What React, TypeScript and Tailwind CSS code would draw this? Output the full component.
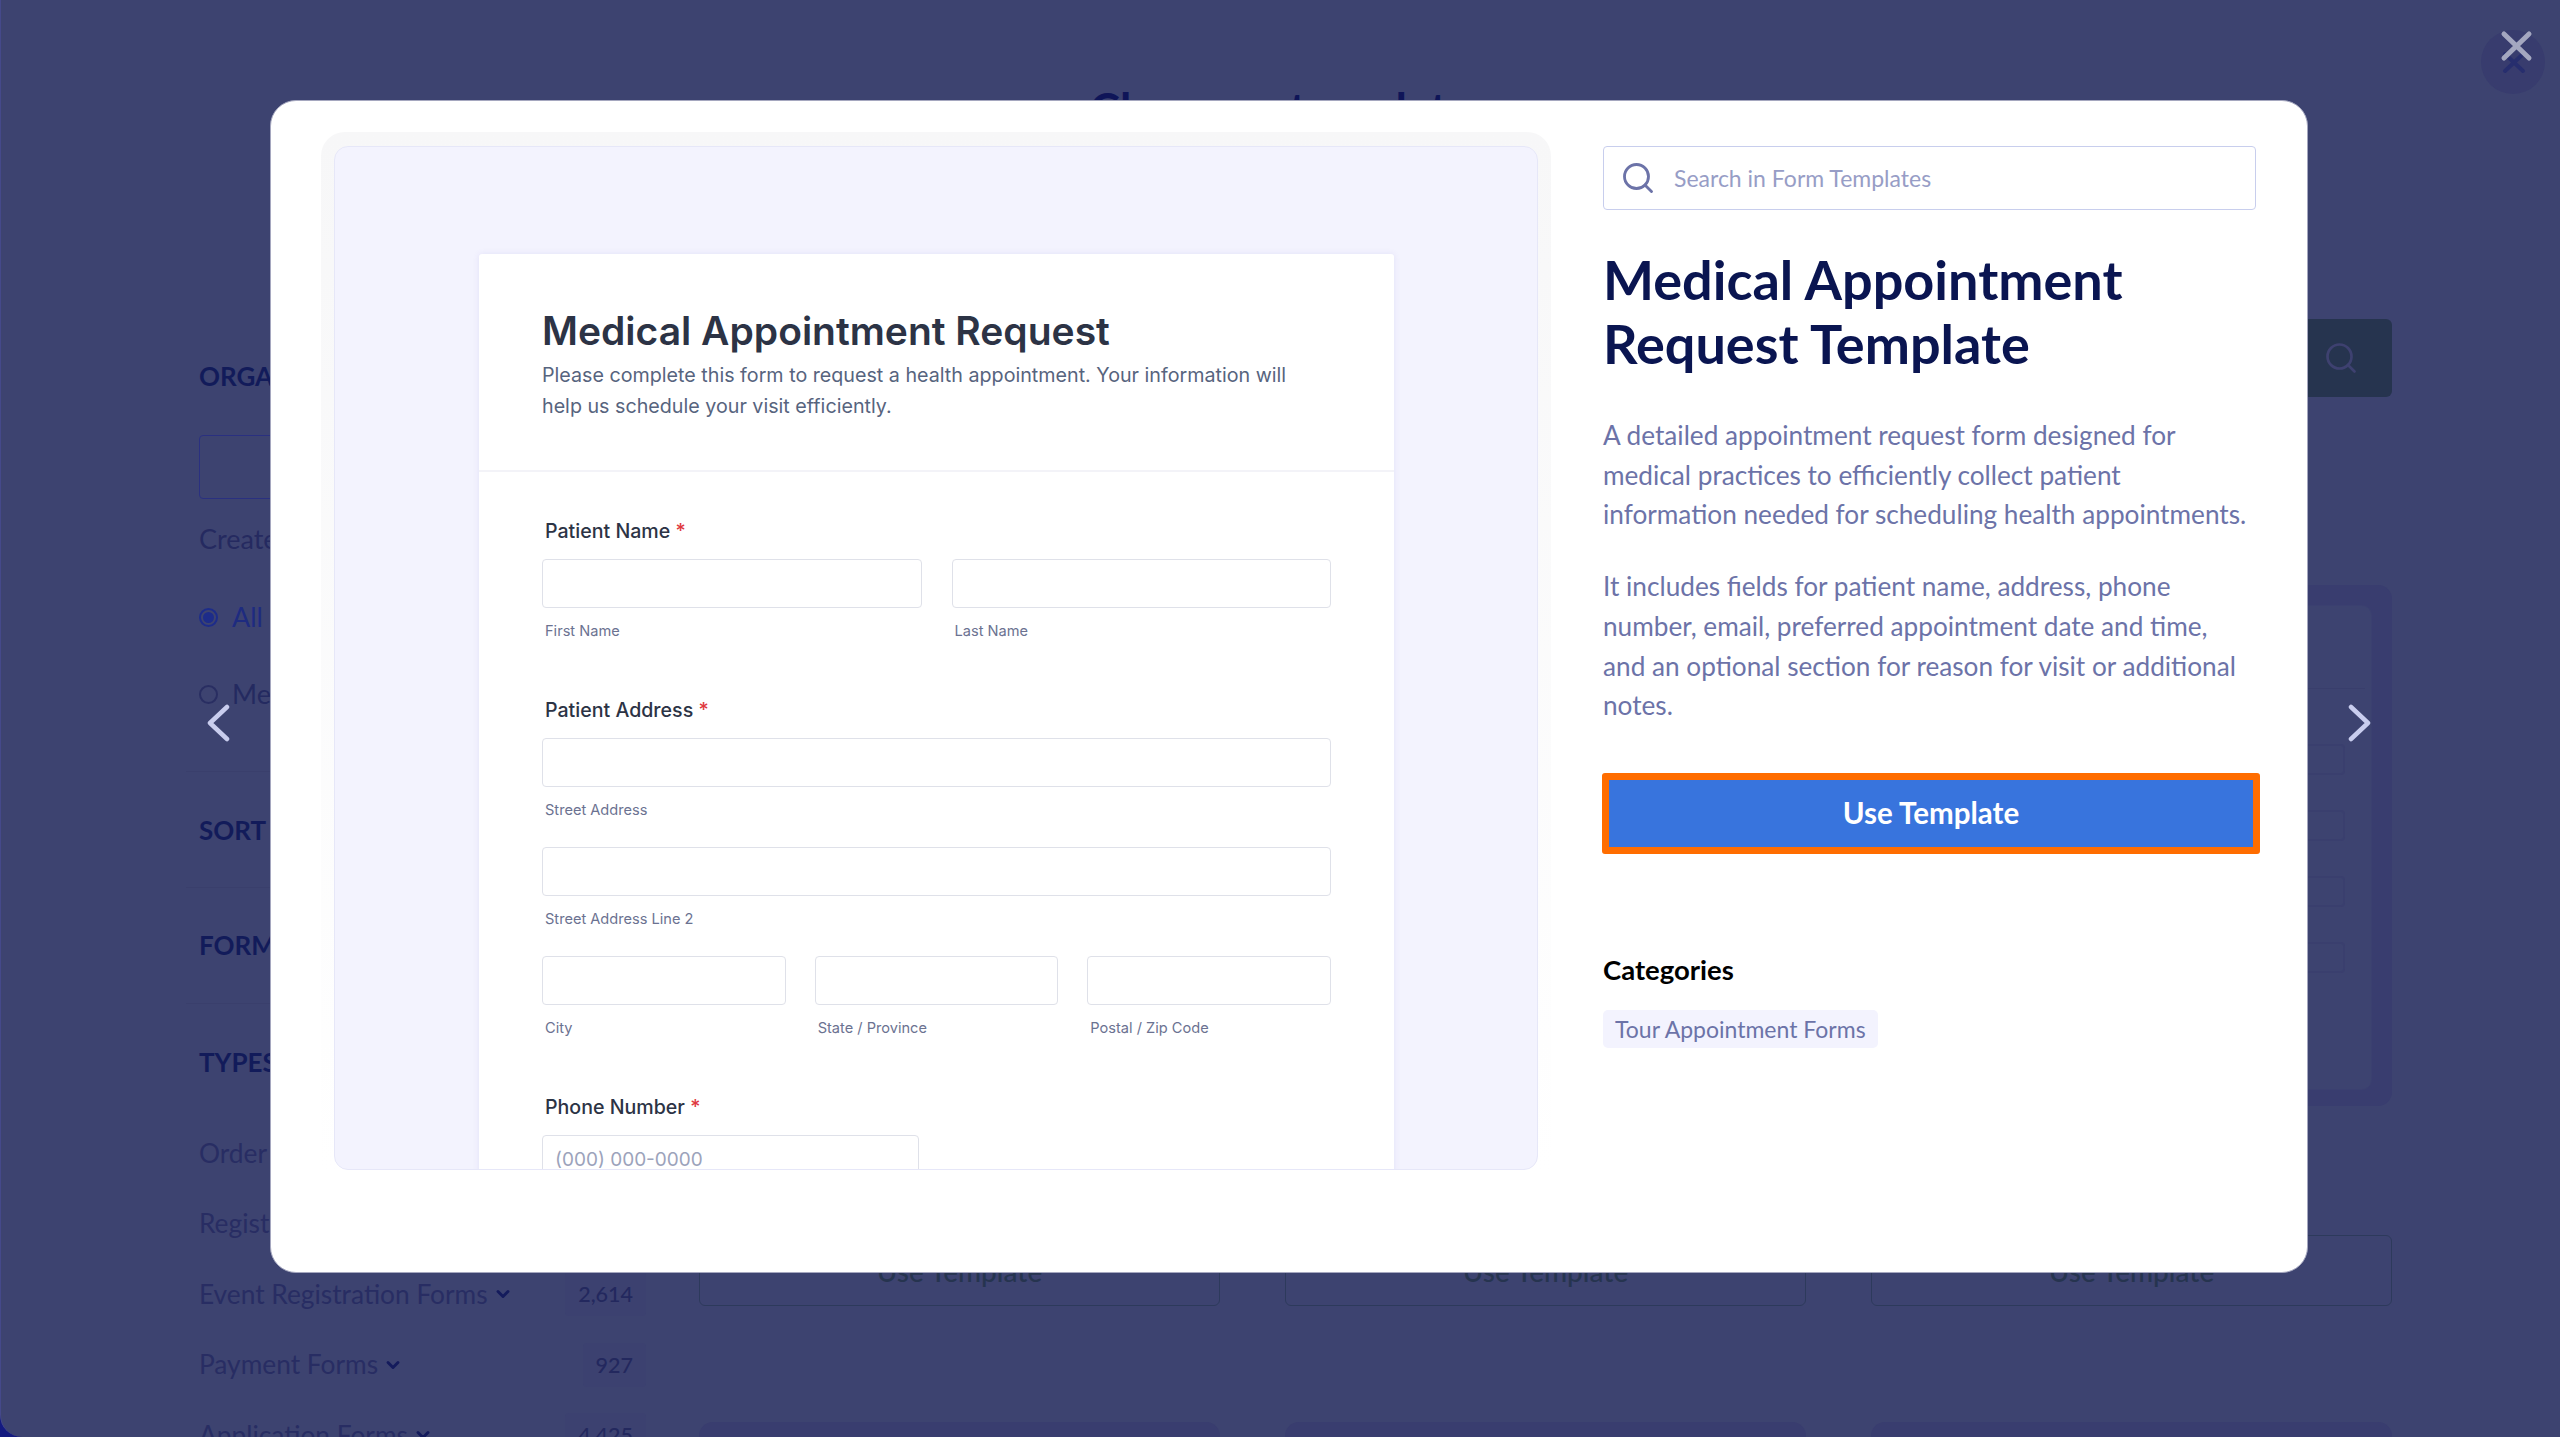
import React from 'react';
import { ChevronDown, Search } from 'lucide-react';

const sideRows = [
  { name: 'Order Forms', count: '' },
  { name: 'Registration Forms', count: '' },
  { name: 'Event Registration Forms', count: '2,614' },
  { name: 'Payment Forms', count: '927' },
  { name: 'Application Forms', count: '4,425' },
];

const Sidebar: React.FC = () => (
  <aside className="w-[460px] shrink-0 pt-[215px] text-[#282d63]">
    <div className="px-[13px]">
      <h3 className="h-[32px] text-[26px] leading-[32px] font-bold text-[#121b5a]">ORGANIZATION</h3>
      <div className="mt-[43px] h-[64px] rounded-[4px] border border-[#2a3080]" />
      <p className="mt-[23px] h-[34px] text-[27px] leading-[34px] text-[#252a60]">Created by</p>
      <div className="mt-[44px] flex h-[34px] items-center gap-[14px] text-[27px] text-[#1e2b80]">
        <span className="flex size-[19px] items-center justify-center rounded-full border-2 border-[#1d2c8a]">
          <span className="size-[11px] rounded-full bg-[#1d2c8a]" />
        </span>
        All
      </div>
      <div className="mt-[43px] flex h-[34px] items-center gap-[14px] text-[27px] text-[#242a60]">
        <span className="size-[19px] rounded-full border-2 border-[#292e62]" />
        Me
      </div>
    </div>
    <div className="mt-[60px] h-px bg-[#3a3f6c]" />
    <h3 className="mx-[13px] mt-[42px] h-[32px] text-[26px] leading-[32px] font-bold text-[#121b5a]">SORT BY</h3>
    <div className="mt-[41px] h-px bg-[#3a3f6c]" />
    <h3 className="mx-[13px] mt-[41px] h-[32px] text-[26px] leading-[32px] font-bold text-[#121b5a]">FORM LAYOUT</h3>
    <div className="mt-[42px] h-px bg-[#3a3f6c]" />
    <h3 className="mx-[13px] mt-[42px] h-[32px] text-[26px] leading-[32px] font-bold text-[#121b5a]">TYPES</h3>
    <div className="mt-[40px] pl-[13px]">
      {sideRows.map((row) => (
        <div key={row.name} className="flex h-[70.5px] items-center justify-between text-[26.3px]">
          <span className="flex items-center gap-[5px]">
            {row.name}
            <ChevronDown size={20} strokeWidth={3.5} className="text-[#141b5c]" />
          </span>
          {row.count && (
            <span className="flex h-[44px] items-center rounded-[4px] bg-[#3c4170] px-[13px] text-[21.5px] font-medium text-[#23285e]">{row.count}</span>
          )}
        </div>
      ))}
    </div>
  </aside>
);

const TemplateCard: React.FC = () => (
  <div>
    <div className="h-[521px] rounded-[14px] bg-[#393d6f] px-[20px] pt-[20px]">
      <div className="h-[485px] rounded-[10px] border border-[#3b4070] bg-[#3d4370] px-[6px] pt-[82px]">
        <div className="h-px bg-[#393e6c]" />
        <div className="mx-[20px] mt-[55px] flex flex-col gap-[35px]">
          {[0, 1, 2, 3].map((i) => (
            <div key={i} className="h-[31px] rounded-[4px] border-2 border-[#3a3f6e]" />
          ))}
        </div>
      </div>
    </div>
    <div className="mt-[129px] flex h-[71px] items-center justify-center rounded-[6px] border border-[#2d3a5c] text-[28px] font-medium text-[#26344f]">
      Use Template
    </div>
  </div>
);

const Background: React.FC = () => (
  <div className="h-full rounded-bl-[22px] border-l border-[#45498a] bg-[#3d4370]">
    <h1 className="pt-[73px] text-center text-[46px] leading-[72px] font-bold text-[#0f1558]">Choose a template</h1>
    <div className="flex pl-[185px] pr-[168px]">
      <Sidebar />
      <main className="ml-[53px] flex-1 pt-[174px]">
        <div className="flex h-[78px] justify-end">
          <div className="flex w-[120px] items-center justify-center rounded-[6px] bg-[#26344f] pl-[18px]">
            <Search size={36} strokeWidth={1.8} className="text-[#3e4170]" />
          </div>
        </div>
        <div className="mt-[188px] grid grid-cols-3 gap-x-[65px]">
          <TemplateCard />
          <TemplateCard />
          <TemplateCard />
          <div className="mt-[116px] h-[521px] rounded-[14px] bg-[#393d6f]" />
          <div className="mt-[116px] h-[521px] rounded-[14px] bg-[#393d6f]" />
          <div className="mt-[116px] h-[521px] rounded-[14px] bg-[#393d6f]" />
        </div>
      </main>
    </div>
  </div>
);

const Label: React.FC<{ text: string }> = ({ text }) => (
  <div className="mb-[14px] h-[28px] pl-[3px] text-[19.6px] leading-[28px] font-medium text-[#2c3345]">
    {text} <span className="text-[#e0393e]">*</span>
  </div>
);

const Input: React.FC<{ sub: string }> = ({ sub }) => (
  <div>
    <div className="h-[49px] rounded-[4px] border-[1.5px] border-[#dfe1e9] bg-white" />
    <div className="mt-[9px] h-[28px] pl-[3px] text-[14.6px] leading-[28px] text-[#6b7291]">{sub}</div>
  </div>
);

const FormPreview: React.FC = () => (
  <div className="h-[1038px] w-[1230px] shrink-0 rounded-t-[24px] bg-gradient-to-b from-[#f7f7f8] to-white px-[13px] pt-[14px]">
    <div className="h-[1024px] overflow-hidden rounded-[14px] border border-[#e6e7f8] bg-[#f3f3fe] pt-[107px] pr-[143px] pl-[144px]">
      <div className="h-[1000px] rounded-t-[3px] bg-white font-['Inter'] shadow-[0_0_6px_rgba(86,70,200,0.1)]">
        <div className="h-[218px] border-b-2 border-[#f3f3f8] pt-[49px] pl-[63px]">
          <h2 className="text-[39px] leading-[56px] font-semibold text-[#2c3345]">Medical Appointment Request</h2>
          <p className="mt-[1px] w-[770px] text-[19.7px] leading-[31px] text-[#57647e]">
            Please complete this form to request a health appointment. Your information will help us schedule your visit efficiently.
          </p>
        </div>
        <div className="pr-[63px] pl-[63px] pt-[45px]">
          <Label text="Patient Name" />
          <div className="grid grid-cols-2 gap-[30px]">
            <Input sub="First Name" />
            <Input sub="Last Name" />
          </div>
          <div className="mt-[51px]">
            <Label text="Patient Address" />
          </div>
          <Input sub="Street Address" />
          <div className="mt-[23px]">
            <Input sub="Street Address Line 2" />
          </div>
          <div className="mt-[23px] grid grid-cols-3 gap-[29px]">
            <Input sub="City" />
            <Input sub="State / Province" />
            <Input sub="Postal / Zip Code" />
          </div>
          <div className="mt-[51px]">
            <Label text="Phone Number" />
          </div>
          <div className="h-[49px] w-[377px] rounded-[4px] border-[1.5px] border-[#dfe1e9] pt-[8px] pl-[12px] text-[19px] leading-[32px] text-[#9ca3bb]">
            (000) 000-0000
          </div>
        </div>
      </div>
    </div>
  </div>
);

const Details: React.FC = () => (
  <div className="ml-[52px] w-[653px] pt-[14px]">
    <div className="flex h-[64px] items-center gap-[18px] rounded-[4px] border border-[#c8ceed] pl-[16px] text-[23px] text-[#979dc6]">
      <Search size={36} strokeWidth={1.9} className="text-[#6c73a8]" />
      Search in Form Templates
    </div>
    <h1 className="mt-[38px] text-[54px] leading-[64px] font-bold text-[#0a1551]">
      Medical Appointment
      <br />
      Request Template
    </h1>
    <p className="mt-[40px] whitespace-nowrap text-[26.2px] leading-[39.7px] text-[#6c73a8]">
      A detailed appointment request form designed for
      <br />
      medical practices to efficiently collect patient
      <br />
      information needed for scheduling health appointments.
    </p>
    <p className="mt-[32px] whitespace-nowrap text-[26.2px] leading-[39.7px] text-[#6c73a8]">
      It includes fields for patient name, address, phone
      <br />
      number, email, preferred appointment date and time,
      <br />
      and an optional section for reason for visit or additional
      <br />
      notes.
    </p>
    <button className="mt-[47px] -ml-px flex h-[81px] w-[658px] items-center justify-center rounded-[3px] border-[7px] border-[#ff6d00] bg-[#3874dd] text-[29.5px] font-bold text-white">
      Use Template
    </button>
    <h4 className="mt-[101px] h-[30px] text-[27.5px] leading-[30px] font-bold text-black">Categories</h4>
    <span className="mt-[25px] inline-flex h-[38px] items-center rounded-[5px] bg-[#f3f3fe] px-[12px] text-[23px] text-[#6c73a8]">
      Tour Appointment Forms
    </span>
  </div>
);

export default function App() {
  return (
    <div className="relative h-[1437px] w-[2560px] overflow-hidden bg-[#141a80] font-['Lato',sans-serif]">
      <Background />

      {/* template preview modal */}
      <div className="absolute top-[100px] left-[270px] flex h-[1173px] w-[2038px] overflow-hidden rounded-[26px] border border-[#a5a7bf] bg-white pt-[31px] pl-[50px]">
        <FormPreview />
        <Details />
      </div>

      {/* carousel arrows */}
      <svg className="absolute top-[704px] left-[205px]" width="28" height="38" viewBox="0 0 28 38" fill="none" stroke="#c9cdee" strokeWidth="4.5" strokeLinecap="round" strokeLinejoin="round">
        <path d="M22 3 5 19l17 16" />
      </svg>
      <svg className="absolute top-[704px] left-[2345px]" width="28" height="38" viewBox="0 0 28 38" fill="none" stroke="#c9cdee" strokeWidth="4.5" strokeLinecap="round" strokeLinejoin="round">
        <path d="m6 3 17 16L6 35" />
      </svg>

      {/* close button, with the page's own button behind it */}
      <div className="absolute top-[30px] left-[2481px] size-[64px] rounded-full bg-[#383c6e]" />
      <svg className="absolute top-[49px] left-[2500px]" width="28" height="27" viewBox="0 0 28 27" fill="none" stroke="#272e6e" strokeWidth="4" strokeLinecap="round">
        <path d="m5 5 18 17M23 5 5 22" />
      </svg>
      <svg className="absolute top-[28px] left-[2498px]" width="37" height="36" viewBox="0 0 37 36" fill="none" stroke="#a4a7c0" strokeWidth="5" strokeLinecap="round">
        <path d="m6 6 25 24M31 6 6 30" />
      </svg>
    </div>
  );
}
